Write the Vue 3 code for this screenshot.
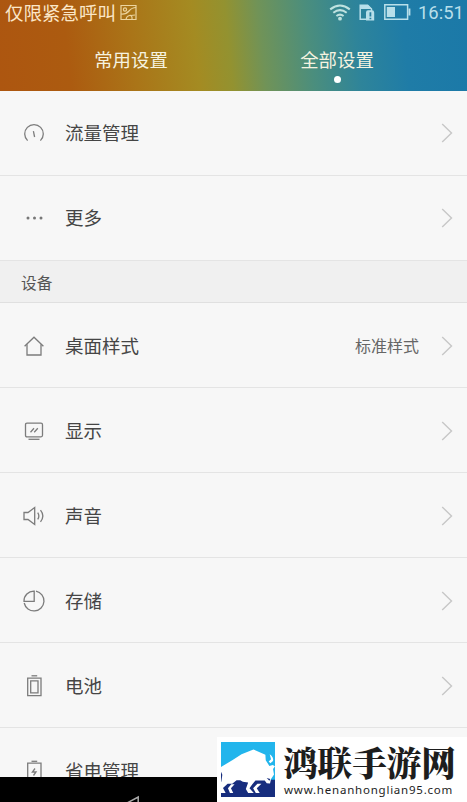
<script setup>
const before = [
  { icon: 'gauge', label: '流量管理' },
  { icon: 'more', label: '更多' },
]
const device = [
  { icon: 'home', label: '桌面样式', value: '标准样式' },
  { icon: 'display', label: '显示' },
  { icon: 'sound', label: '声音' },
  { icon: 'storage', label: '存储' },
  { icon: 'battery', label: '电池' },
  { icon: 'saver', label: '省电管理' },
]
const groups = [{ items: before }, { title: '设备', items: device }]
const icons = {
  gauge: ['M5.6 19.6A9.3 9.3 0 1 1 18.4 19.6', 'M11.4 10.2L12.6 16'],
  home: ['M2.6 12.3L12 3.2L21.4 12.3', 'M5 10.2V21H19V10.2'],
  display: ['M5 4.2H19Q20.5 4.2 20.5 5.7V16.3Q20.5 17.8 19 17.8H5Q3.5 17.8 3.5 16.3V5.7Q3.5 4.2 5 4.2Z', 'M6.5 20.3H17.5', 'M8.5 13.2L12 9.2M12.2 13.2L15.8 9.2'],
  sound: ['M2 8.5H6L12.7 3.6V20.4L6 15.5H2Z', 'M15.7 8.6Q18 12 15.7 15.4', 'M18.5 6.2Q23.2 12 18.5 17.8'],
  storage: ['M14 2.1A10 10 0 1 1 2.2 14', 'M12.2 2.2V12.4H2A9.8 9.8 0 0 1 12.2 2.2Z'],
  battery: ['M5.7 4.1H19V21.7H5.7Z', 'M8.7 6.9H16V18.9H8.7Z', 'M9.5 1.8H15.2'],
  saver: ['M5.7 4.2H19V21.5H5.7Z', 'M9.5 2.3H15.2', 'M13 9.5L10.4 13H14L11.5 16.5'],
}
</script>

<template>
  <main class="screen">
    <header class="header">
      <div class="status">
        <span class="carrier">仅限紧急呼叫</span>
        <svg class="shot" width="17" height="17" viewBox="0 0 17 17">
          <path d="M1 1.5H16V15.5H1Z" />
          <path d="M1 10Q6 10.5 9 7T16 3.5M6 15.5Q6.5 12 9.5 11.5T12 15.5M11 11.5L15 11" />
          <circle cx="5" cy="5.5" r="1.6" />
        </svg>
        <span class="spacer"></span>
        <svg class="wifi" width="22" height="17" viewBox="0 0 22 17">
          <path d="M1.2 5.4Q11-2.4 20.8 5.4M4.3 8.8Q11 3.5 17.7 8.8M7.4 12Q11 9.2 14.6 12" />
          <circle cx="11" cy="14.7" r="1.9" />
        </svg>
        <svg class="sim" width="16" height="17" viewBox="0 0 16 17">
          <path class="line" d="M7 15.2H1.2V1.2H8.6L12.5 5V7" />
          <path class="solid" d="M1 1H9L13 5H1ZM7 8.5Q7 6.2 9 6.2H13Q15.2 6.2 15.2 8.5V16.5H7Z" />
          <path class="mark" d="M11.4 8.2V12.6M11.4 13.8V15.3" />
        </svg>
        <svg class="cell" width="27" height="16" viewBox="0 0 27 16">
          <path class="line" d="M.8.8H23.6V15.2H.8Z" />
          <path class="solid" d="M2.8 3H11V13H2.8ZM24.5 4.5H26.4V11.5H24.5Z" />
        </svg>
        <time>16:51</time>
      </div>
      <nav class="tabs">
        <span>常用设置</span>
        <span class="active">全部设置</span>
      </nav>
    </header>

    <section class="list">
      <div v-for="(group, n) in groups" :key="n" class="group" :class="{ titled: group.title }">
        <h2 v-if="group.title">{{ group.title }}</h2>
        <div v-for="item in group.items" :key="item.label" class="row">
          <svg class="icon" width="24" height="24" viewBox="0 0 24 24">
            <g v-if="item.icon === 'more'" class="dots">
              <circle cx="6" cy="12" r="1.5" /><circle cx="12.5" cy="12" r="1.5" /><circle cx="19" cy="12" r="1.5" />
            </g>
            <path v-for="d in icons[item.icon]" :key="d" :d="d" />
          </svg>
          <span class="label">{{ item.label }}</span>
          <span class="value">{{ item.value }}</span>
          <svg class="chevron" width="12" height="20" viewBox="0 0 12 20"><path d="M1.2 1L10.5 10L1.2 19" /></svg>
        </div>
      </div>
    </section>

    <footer class="navbar">
      <svg width="16" height="8" viewBox="0 0 16 8"><path d="M1 8L12.2 2V8" /></svg>
    </footer>

    <aside class="brand">
      <svg class="logo" width="54" height="55" viewBox="0 0 163 163" preserveAspectRatio="none">
        <path fill="#22b5ec" d="M0 0H163V113H0Z" />
        <path fill="#172d7e" d="M0 112H163V163H0Z" />
        <path fill="#fff" d="M0 74L34 54L62 36L98 22L134 38L135 54L146 71L156 68L163 72L157 80L160 96L151 110L148 123L138 122L132 114H104L94 126L86 137L99 151H82L75 139L82 120L66 118L58 113H47L34 124H20L6 136L14 151H0Z" />
        <path fill="#fff" d="M147 36Q160 45 157 56L149 63L144 58L151 51Z" />
        <path fill="#fff" d="M21 137L31 125H41L30 137L37 151H27ZM97 137L110 124H122L108 137L117 151H105Z" />
        <path fill="#172d7e" d="M0 88L4 97L1 118H0ZM138 107L149 110L146 115Z" />
      </svg>
      <div class="words">
        <strong>鸿联手游网</strong>
        <small>www.henanhonglian95.com</small>
      </div>
    </aside>
  </main>
</template>

<style>
body {
  margin: 0;
}
</style>

<style scoped>
.screen {
  position: relative;
  display: flex;
  flex-direction: column;
  width: 467px;
  height: 802px;
  overflow: hidden;
  background: #f7f7f7;
  color: #454545;
  font-family: "Noto Sans CJK SC", sans-serif;
}
svg {
  display: block;
  flex: none;
  fill: none;
}
.header {
  flex: none;
  height: 91px;
  color: #f6f3e0;
  background: linear-gradient(84deg, #ad5610 0%, #ac5b10 15%, #aa7518 29%, #a48b22 42%, #939230 49%, #709358 56%, #4b8e7d 66%, #2e849a 76%, #1f7ca7 86%, #1b79a8 100%);
}
.status {
  display: flex;
  align-items: center;
  height: 24px;
  padding: 0 5px;
  font-size: 18.5px;
  line-height: 24px;
}
.carrier {
  color: #fbe7c8;
}
.spacer {
  flex: 1;
}
.shot {
  margin-left: 4px;
  stroke: #ecd49f;
  stroke-width: 1.2;
}
.wifi {
  stroke: #bfe2e0;
  stroke-width: 2;
}
.wifi circle {
  fill: #bfe2e0;
  stroke: none;
}
.sim {
  margin-left: 8px;
}
.cell {
  margin-left: 9px;
}
.line {
  stroke: #b8dfea;
  stroke-width: 1.5;
}
.solid {
  fill: #b8dfea;
}
.mark {
  stroke: #267fa0;
  stroke-width: 1.8;
}
time {
  width: 44px;
  margin-left: 7px;
  color: #b8dfea;
  font-family: Roboto, sans-serif;
  font-size: 18.4px;
  line-height: 25px;
  white-space: nowrap;
}
.tabs {
  display: grid;
  grid-template-columns: 206px 206px;
  padding: 22px 0 0 28px;
  font-size: 18.4px;
  line-height: 26px;
}
.tabs span {
  display: flex;
  flex-direction: column;
  align-items: center;
}
.active::after {
  width: 7px;
  height: 7px;
  margin-top: 4px;
  border-radius: 50%;
  background: #fff;
  content: "";
}
.list {
  flex: none;
  height: 686px;
  overflow: hidden;
}
.row {
  display: flex;
  align-items: center;
  box-sizing: border-box;
  height: 85px;
  padding: 0 14px 1px 22px;
  border-bottom: 1px solid #e4e4e4;
}
.titled .row {
  padding-top: 2px;
  padding-bottom: 0;
}
.icon {
  stroke: #7c7c7c;
  stroke-width: 1.3;
}
.dots {
  fill: #777;
  stroke: none;
}
.label,
.value {
  padding-bottom: 2px;
}
.label {
  margin-left: 19px;
  font-size: 18.5px;
}
.value {
  margin-left: auto;
  margin-right: 22px;
  color: #666;
  font-size: 16px;
}
.chevron {
  stroke: #c7c7c7;
  stroke-width: 1.4;
}
h2 {
  box-sizing: border-box;
  height: 42px;
  margin: 0;
  padding-left: 21px;
  border-bottom: 1px solid #e0e0e0;
  background: #f0f0f0;
  color: #555;
  font-size: 15.7px;
  font-weight: 400;
  line-height: 43px;
}
.navbar {
  flex: 1;
  padding: 18px 0 0 126px;
  background: #000;
}
.navbar svg {
  stroke: #aaa;
  stroke-width: 1.5;
}
.brand {
  position: absolute;
  right: 0;
  bottom: 0;
  display: flex;
  box-sizing: border-box;
  width: 250px;
  height: 65px;
  padding: 5px 0 0 4px;
  background: #fff;
}
.words {
  display: flex;
  flex-direction: column;
  margin-left: 8px;
  color: #1d1d1d;
}
strong {
  font-family: "Noto Serif CJK SC", "Noto Sans CJK SC", serif;
  font-size: 34.6px;
  font-weight: 900;
  line-height: 38px;
  white-space: nowrap;
}
small {
  margin: 3px 0 0 1px;
  font-family: "Noto Sans", sans-serif;
  font-size: 11.5px;
  letter-spacing: 0.78px;
  line-height: 14px;
  white-space: nowrap;
}
</style>
